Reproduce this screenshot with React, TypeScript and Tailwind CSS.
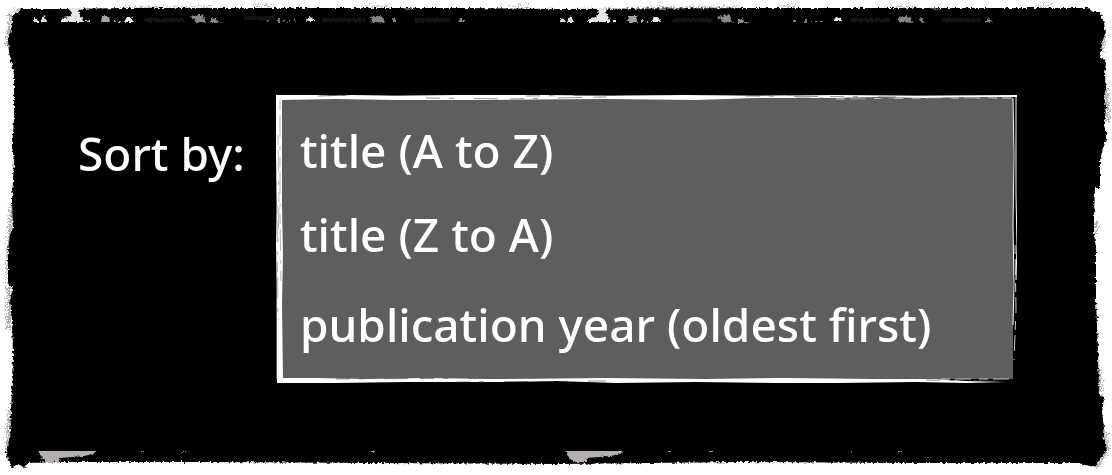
import React from 'react';

const FONT =
  "font-['Chalkboard','Comic_Sans_MS','Noto_Sans',sans-serif] text-[46px] font-medium leading-[60px] text-white";

const SPECKLE_RUN = 527;

const PANEL =
  'M22 9 L60 9 L130 8 L300 8 L460 8 L560 9 L760 8 L930 8 L1088 8 L1093 12 L1100 12 L1103 20 L1106 32 L1102 42 L1100 58 L1106 60 L1105 75 L1106 88 L1104 96 L1106 108 L1104 125 L1107 136 L1103 148 L1100 160 L1100 188 L1095 188 L1094 215 L1094 232 L1096 250 L1096 300 L1098 350 L1099 395 L1104 397 L1102 412 L1104 428 L1103 435 L1107 448 L1102 458 L1094 467 L1078 463 L900 463 L740 462 L560 464 L370 463 L200 462 L60 462 L26 463 L25 468 L18 464 L11 468 L8 460 L6 452 L10 440 L11 418 L12 380 L13 355 L12 320 L10 300 L13 289 L8 283 L8 250 L10 235 L13 228 L12 200 L14 160 L12 146 L14 120 L14 75 L12 65 L9 52 L8 40 L12 26 L12 16 Z';

function Debris({ x }: { x: number }) {
  return (
    <g transform={`translate(${x} 0)`}>
      <path d="M69 8 L80 8 L79 13 L82 18 L84 22 L60 22 L63 18 L69 17 L72 13 Z" fill="#e8e8e8" />
      <path d="M34 18 l3 1 l2 3 l-5 0 Z M40 22 l4 -7 l3 7 Z M86 20 h4 v2 h-4 Z" fill="#dedede" />
      <path d="M102 16 h7 l1 6 h-9 Z M114 20 h2 v2 h-2 Z M119 21 h2 v1 h-2 Z" fill="#a5a5a5" />
      <path d="M124 22 L127 17 L131 17 L134 22 Z M306 21 L309 17 L313 18 L315 21 Z" fill="#eeeeee" />
      <path d="M190 17 l8 -2 l5 0 l1 5 l3 3 l-6 -1 l-5 1 l-2 -4 Z M211 19 l4 -1 l3 4 l6 1 h-13 Z" fill="#8a8a8a" />
      <path d="M266 20 h3 v2 h-3 Z M278 19 h2 v4 h-2 Z M283 21 h2 v1 h-2 Z M288 21 h2 v1 h-2 Z M294 20 h2 v2 h-2 Z" fill="#777777" />
      <path d="M371 17 l7 -1 l5 1 l2 6 l-8 -1 l-5 1 Z M392 19 l3 -1 l2 4 h-4 Z M458 22 l3 -4 l4 4 Z" fill="#858585" />
      <path d="M403 8 l8 0 l4 2 l-8 0 Z" fill="#555555" />
    </g>
  );
}

function Residue({ x }: { x: number }) {
  return (
    <g transform={`translate(${x} 0)`}>
      <path d="M38 450 L98 450 L93 454 L84 456 L60 458 L59 462 L46 462 L41 456 Z" fill="#b3aeb1" />
      <path d="M141 451 h3 v1 h-3 Z M182 451 h4 v1 h-4 Z M324 451 h1 v1 h-1 Z M371 451 h4 v1 h-4 Z" fill="#999999" />
    </g>
  );
}

function TornPanel() {
  return (
    <svg
      aria-hidden="true"
      className="pointer-events-none absolute inset-0 h-full w-full"
      viewBox="0 0 1112 475"
      preserveAspectRatio="none"
    >
      <defs>
        <filter id="torn" x="-2%" y="-3%" width="104%" height="106%" colorInterpolationFilters="sRGB">
          <feTurbulence type="fractalNoise" baseFrequency="0.35" numOctaves="3" seed="7" result="n" />
          <feDisplacementMap in="SourceGraphic" in2="n" scale="4" xChannelSelector="R" yChannelSelector="G" />
          <feGaussianBlur stdDeviation="0.6" />
        </filter>
        <filter id="dust" x="-2%" y="-3%" width="104%" height="106%" colorInterpolationFilters="sRGB">
          <feTurbulence type="fractalNoise" baseFrequency="0.6" numOctaves="2" seed="3" result="n" />
          <feDisplacementMap in="SourceGraphic" in2="n" scale="12" xChannelSelector="R" yChannelSelector="G" />
          <feGaussianBlur stdDeviation="0.7" />
        </filter>
        <filter id="grit" x="-2%" y="-3%" width="104%" height="106%" colorInterpolationFilters="sRGB">
          <feTurbulence type="fractalNoise" baseFrequency="0.5" numOctaves="2" seed="11" result="n" />
          <feDisplacementMap in="SourceGraphic" in2="n" scale="4" xChannelSelector="R" yChannelSelector="G" />
          <feGaussianBlur stdDeviation="0.3" />
        </filter>
      </defs>
      <g filter="url(#dust)" fill="none" stroke="#000000">
        <path
          d="M11 14 L8 45 M12 205 L9 255 L9 330 M10 410 L8 450 M1104 35 L1101 52 M1106 88 L1108 120 M1096 222 L1096 234 M1099 370 L1100 392 M1104 430 L1107 450 L1096 467"
          strokeWidth="4"
          opacity="0.3"
        />
        <path
          d="M13 11 L24 9 M120 8 H215 M255 6 H272 M365 7 H390 M512 6 H530 M640 8 H740 M780 6 H796 M895 7 H918 M1038 6 H1053"
          strokeWidth="2"
          opacity="0.25"
        />
      </g>
      <path d={PANEL} fill="#000000" filter="url(#torn)" />
      <g filter="url(#grit)">
        <path
          d="M145 20 H185 M244 18 H275 M322 20 H365 M415 20 H450 M672 20 H712 M850 20 H890 M942 20 H980"
          stroke="#141414"
          strokeWidth="4"
        />
        <Debris x={0} />
        <Debris x={SPECKLE_RUN} />
        <Residue x={0} />
        <Residue x={SPECKLE_RUN} />
      </g>
      <path d="M24 24 H1088 V32 H24 Z M24 442 H1088 V451 H24 Z" fill="#000000" />
    </svg>
  );
}

function ChalkFrame() {
  return (
    <svg
      aria-hidden="true"
      className="pointer-events-none absolute inset-0 h-full w-full"
      viewBox="0 0 741 288"
      preserveAspectRatio="none"
    >
      <path
        fill="#ffffff"
        d="M0 0 L42 0 L58 1 L76 0 L120 1 L180 0 L270 0 L330 1 L410 0 L480 1 L560 0 L640 1 L741 0 L741 2 L690 2 L650 3 L600 2 L560 3 L480 3 L420 5 L330 4 L210 5 L120 5 L60 4 L6 5 L6 110 L7 160 L6 210 L7 283 L40 283 L90 284 L150 283 L220 284 L330 283 L430 284 L500 283 L600 284 L660 284 L690 286 L731 287 L690 288 L640 287 L560 288 L500 288 L420 287 L340 288 L280 286 L225 287 L180 287 L130 287 L60 288 L1 288 L1 190 L0 150 L1 110 L0 60 Z"
      />
      <path fill="none" stroke="#ffffff" d="M737 3 L738 60 L737 130 L738 190 L737 230 M740 1 L740 100 L741 150 L740 185" />
      <path
        fill="none"
        stroke="#cccccc"
        strokeDasharray="9 5 16 8"
        d="M739 150 L740 215 L738 265 M560 4 L650 3 L735 3 M665 284 H733"
      />
      <path
        fill="none"
        stroke="#4a4a4a"
        strokeWidth="0.6"
        strokeDasharray="14 9 5 20 24 12"
        d="M42 1 L80 0 M250 1 L340 0 M470 1 L620 2 M150 3 L230 4 L330 2 M520 3 L720 4 M180 287 L330 286 M60 284 L230 283 M650 285 L725 286"
      />
      <path
        fill="none"
        stroke="#999999"
        strokeWidth="0.7"
        strokeDasharray="10 5 22 9 4 7"
        d="M2 40 L3 110 L2 150 M4 5 L4 115 L5 190 M1 110 L2 225"
      />
    </svg>
  );
}

export default function App() {
  return (
    <main className="relative flex min-h-screen items-start bg-white pt-[95px] pr-[95px] pb-[91px] pl-[78px]">
      <TornPanel />
      <label htmlFor="sort" className={`relative mt-7 w-[198px] shrink-0 whitespace-nowrap ${FONT}`}>
        Sort by:
      </label>
      <div className="relative min-w-0 flex-1 pr-1 pb-1">
        <select
          id="sort"
          size={3}
          className={`block h-[284px] w-full appearance-none overflow-hidden rounded-none border-0 bg-[#5e5e5e] pt-6 pr-0 pb-0 pl-6 outline-none ${FONT}`}
        >
          <option className="h-[84px] p-0 leading-[60px] font-medium" value="title-asc">title (A to Z)</option>
          <option className="h-[90px] p-0 leading-[60px] font-medium" value="title-desc">title (Z to A)</option>
          <option className="h-[84px] p-0 leading-[60px] font-medium" value="year-asc">publication year (oldest first)</option>
        </select>
        <ChalkFrame />
      </div>
    </main>
  );
}
